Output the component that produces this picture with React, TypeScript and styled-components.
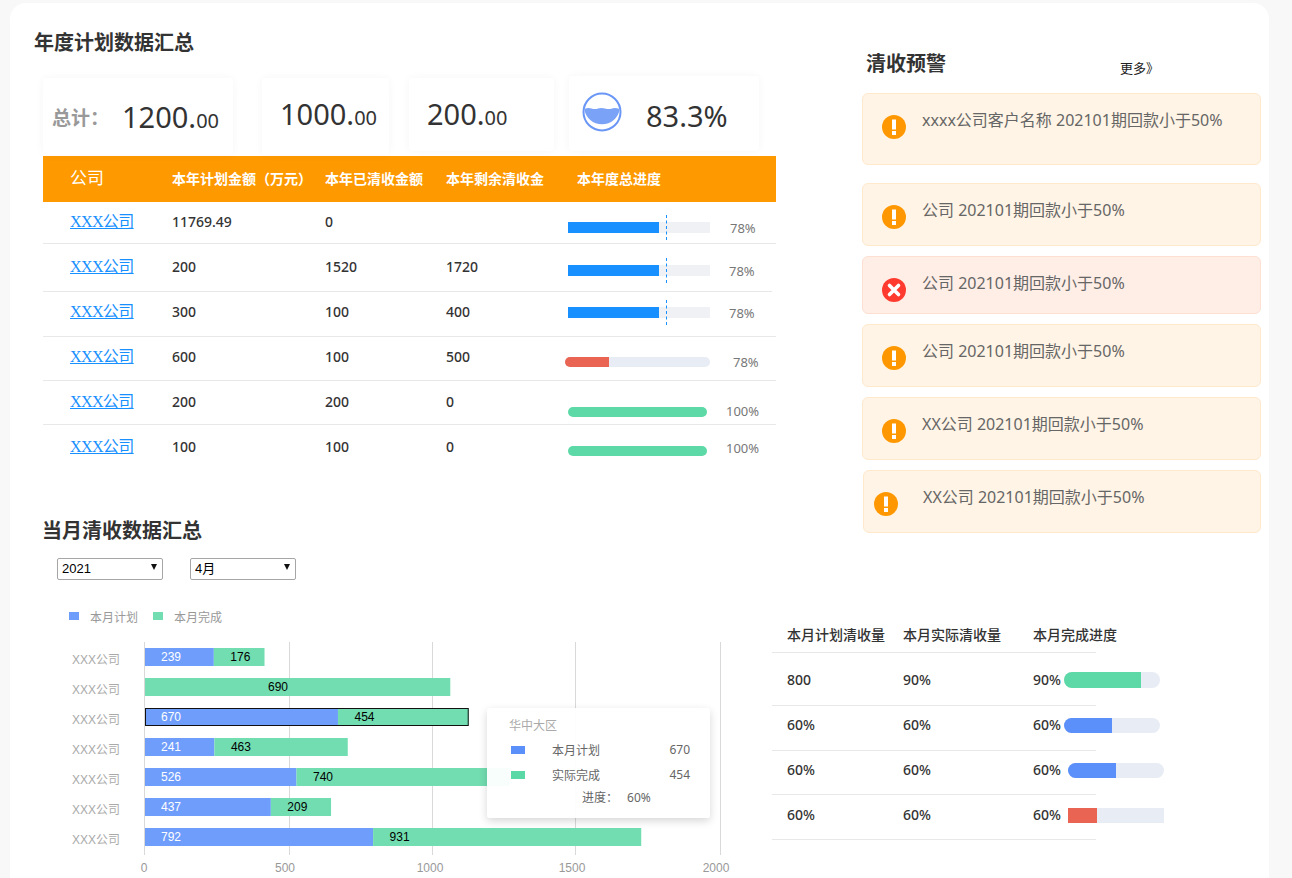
import React, { FC } from 'react';
import styled, { createGlobalStyle } from 'styled-components';

const SANS = `"Noto Sans", "Noto Sans CJK SC", sans-serif`;

const GlobalStyle = createGlobalStyle`
  html, body {
    margin: 0;
    padding: 0;
    height: 878px;
    overflow: hidden;
    background: #f8f8f8;
    font-family: ${SANS};
  }
  * { box-sizing: border-box; }
`;

const Card = styled.div`
  margin: 3px 23px 0 10px;
  height: 900px;
  background: #fff;
  border-radius: 16px;
  display: grid;
  grid-template-columns: 852px 1fr;
  grid-template-rows: 513px 110px auto;
`;

const Annual = styled.section`
  padding-top: 30px;
`;

const Title = styled.h2<{ $left: number }>`
  margin: 0 0 0 ${(p) => p.$left}px;
  font-size: 20px;
  line-height: 20px;
  font-weight: 700;
  color: #333;
  white-space: nowrap;
`;

const StatsRow = styled.div`
  display: flex;
  align-items: flex-start;
  margin: 25px 0 0 33px;
  height: 78px;
`;

const Stat = styled.div<{ $w: number; $h: number; $gap: number; $raise?: number }>`
  width: ${(p) => p.$w}px;
  height: ${(p) => p.$h}px;
  margin-left: ${(p) => p.$gap}px;
  margin-top: ${(p) => -(p.$raise || 0)}px;
  border-radius: 4px;
  background: #fff;
  box-shadow: 0 0 10px rgba(0, 0, 0, 0.04);
  display: flex;
  align-items: center;
  padding-left: ${(p) => (p.$gap === 0 ? 9 : 18)}px;
`;

const StatLabel = styled.span`
  font-size: 19px;
  font-weight: 700;
  color: #999;
  width: 70px;
  margin-top: 0;
  white-space: nowrap;
`;

const StatValue = styled.span<{ $top?: number }>`
  font-size: 29px;
  color: #333;
  margin-top: ${(p) => p.$top || 0}px;
  line-height: 36px;
`;

const StatCents = styled.span`
  font-size: 20px;
`;

const Liquid = styled.svg`
  width: 40px;
  height: 40px;
  margin: -3px 24px 0 -5px;
  flex: none;
`;

const Table = styled.div`
  margin-left: 33px;
`;

const HeadRow = styled.div`
  width: 733px;
  height: 46px;
  background: #ff9900;
  color: #fff;
  display: grid;
  grid-template-columns: 102px 153px 121px 131px 1fr;
  padding: 0 0 3px 27px;
  align-items: center;
  font-size: 14px;
  font-weight: 700;
`;

const HeadCompany = styled.span`
  font-size: 17px;
  font-weight: 400;
  margin-top: -2px;
`;

const Row = styled.div<{ $h: number; $w: number; $last?: boolean }>`
  width: ${(p) => p.$w}px;
  height: ${(p) => p.$h}px;
  display: grid;
  grid-template-columns: 102px 153px 121px 122px 1fr;
  padding-left: 27px;
  align-items: start;
  border-bottom: ${(p) => (p.$last ? 'none' : '1px solid #e8e8e8')};
  font-size: 14px;
  font-weight: 500;
  color: #333;
`;

const Cell = styled.div<{ $top: number }>`
  margin-top: ${(p) => p.$top}px;
  line-height: 24px;
  height: 24px;
`;

const CompanyLink = styled.a`
  font-family: "Liberation Serif", "Noto Sans CJK SC", serif;
  font-size: 16px;
  font-weight: 400;
  letter-spacing: -0.6px;
  color: #1890ff;
  text-decoration: underline;
`;

const ProgressCell = styled.div<{ $top: number; $left: number }>`
  margin-top: ${(p) => p.$top}px;
  margin-left: ${(p) => p.$left}px;
  display: flex;
  align-items: center;
  height: 11px;
`;

const Track = styled.div<{ $w: number; $h: number; $round: boolean; $bg: string; $ml?: number }>`
  position: relative;
  flex: none;
  width: ${(p) => p.$w}px;
  height: ${(p) => p.$h}px;
  margin-left: ${(p) => p.$ml || 0}px;
  background: ${(p) => p.$bg};
  border-radius: ${(p) => (p.$round ? p.$h / 2 : 0)}px;
  overflow: ${(p) => (p.$round ? 'hidden' : 'visible')};
`;

const Fill = styled.div<{ $w: number; $color: string }>`
  width: ${(p) => p.$w}px;
  height: 100%;
  background: ${(p) => p.$color};
`;

const Marker = styled.div`
  position: absolute;
  left: 98px;
  top: -7px;
  height: 25px;
  border-left: 1px dashed #1890ff;
`;

const Percent = styled.span<{ $gap: number; $shift?: number }>`
  margin-left: ${(p) => p.$gap}px;
  margin-bottom: ${(p) => (p.$shift || 0) * 2}px;
  font-size: 13px;
  font-weight: 400;
  color: #777;
  white-space: nowrap;
`;

const Warnings = styled.aside`
  grid-row: 1 / 3;
  grid-column: 2;
  padding-top: 51px;
`;

const WarningHead = styled.div`
  display: flex;
  align-items: flex-end;
  height: 20px;
  margin-left: 4px;
`;

const More = styled.span`
  margin-left: 174px;
  font-size: 13px;
  color: #222;
  line-height: 16px;
  margin-bottom: -2px;
  white-space: nowrap;
`;

const Alert = styled.div<{ $h: number; $gap: number; $danger?: boolean; $shifted?: boolean }>`
  display: flex;
  align-items: flex-start;
  width: ${(p) => (p.$shifted ? 398 : 399)}px;
  height: ${(p) => p.$h}px;
  margin-top: ${(p) => p.$gap}px;
  margin-left: ${(p) => (p.$shifted ? 1 : 0)}px;
  padding-left: ${(p) => (p.$shifted ? 10 : 19)}px;
  background: ${(p) => (p.$danger ? '#ffeee6' : '#fff4e5')};
  border: 1px solid ${(p) => (p.$danger ? '#fde0d2' : '#ffe9cc')};
  border-radius: 6px;
`;

const AlertIcon = styled.svg`
  flex: none;
  width: 24px;
  height: 24px;
  margin-top: 21px;
`;

const AlertText = styled.span<{ $gap: number }>`
  margin-left: ${(p) => p.$gap}px;
  margin-top: 14px;
  line-height: 24px;
  font-size: 16px;
  color: #666;
  white-space: nowrap;
`;

const MonthHead = styled.section`
  padding-top: 5px;
  grid-column: 1;
`;

const Selects = styled.div`
  display: flex;
  gap: 27px;
  margin: 15px 0 0 47px;
`;

const SelectBox = styled.div`
  position: relative;
  width: 106px;
  height: 22px;
  &::after {
    content: '';
    position: absolute;
    right: 6px;
    top: 8px;
    border-left: 3.5px solid transparent;
    border-right: 3.5px solid transparent;
    border-top: 6px solid #111;
    pointer-events: none;
  }
`;

const Select = styled.select`
  appearance: none;
  width: 100%;
  height: 100%;
  padding: 0 0 1px 4px;
  background: #fff;
  border: 1px solid #a6a6a6;
  border-radius: 2px;
  font-family: "Liberation Sans", "Noto Sans CJK SC", sans-serif;
  font-size: 13px;
  color: #000;
`;

const Legend = styled.div`
  display: flex;
  align-items: center;
  margin: 30px 0 0 59px;
  height: 18px;
  font-size: 12px;
  color: #999;
`;

const Swatch = styled.i<{ $color: string; $w: number; $h: number }>`
  display: block;
  flex: none;
  width: ${(p) => p.$w}px;
  height: ${(p) => p.$h}px;
  background: ${(p) => p.$color};
`;

const LegendSwatch = styled(Swatch)`
  margin-top: -3px;
`;

const LegendLabel = styled.span<{ $w: number }>`
  margin-left: 11px;
  width: ${(p) => p.$w}px;
`;

const MonthBody = styled.section`
  grid-column: 1 / 3;
  display: flex;
  align-items: flex-start;
`;

const ChartBox = styled.div`
  position: relative;
  flex: none;
  width: 762px;
  height: 252px;
`;

const ChartSvg = styled.svg`
  display: block;
  font-family: "Liberation Sans", "Noto Sans CJK SC", sans-serif;
`;

const Tooltip = styled.div`
  position: absolute;
  left: 477px;
  top: 82px;
  width: 223px;
  height: 110px;
  padding: 9px 20px 0 22px;
  background: rgba(255, 255, 255, 0.95);
  border-radius: 3px;
  box-shadow: 0 3px 8px rgba(0, 0, 0, 0.16);
  font-size: 12px;
  color: #666;
`;

const TipTitle = styled.div`
  color: #aaa;
  line-height: 18px;
  margin-bottom: 2px;
`;

const TipRow = styled.div`
  display: flex;
  align-items: center;
  height: 25px;
  padding-left: 2px;
`;

const TipName = styled.span`
  margin-left: 27px;
  flex: 1;
`;

const TipFoot = styled.div`
  margin: 0 0 0 73px;
  line-height: 22px;
`;

const TipFootValue = styled.span`
  margin-left: 9px;
`;

const MonthTable = styled.div`
  width: 324px;
  font-size: 14px;
  color: #333;
`;

const MonthHeadRow = styled.div`
  display: grid;
  grid-template-columns: 116px 130px 1fr;
  padding-left: 15px;
  height: 27px;
  line-height: 18px;
  font-weight: 500;
  font-size: 14px;
  white-space: nowrap;
  border-bottom: 1px solid #e8e8e8;
`;

const MonthRow = styled.div<{ $h: number; $top: number }>`
  display: grid;
  grid-template-columns: 116px 130px 1fr;
  padding: ${(p) => p.$top}px 0 0 15px;
  height: ${(p) => p.$h}px;
  line-height: 20px;
  font-weight: 500;
  border-bottom: 1px solid #e8e8e8;
`;

const MonthProgress = styled.div`
  display: flex;
  align-items: center;
  height: 20px;
  width: 140px;
`;

const MonthValue = styled.span`
  width: 31px;
  flex: none;
`;

const WarnIcon: FC = () => (
  <AlertIcon viewBox="0 0 24 24">
    <circle cx="12" cy="12" r="12" fill="#ff9800" />
    <rect x="10" y="4.5" width="4" height="10" fill="#fff" />
    <rect x="10" y="16" width="4" height="4" fill="#fff" />
  </AlertIcon>
);

const ErrorIcon: FC = () => (
  <AlertIcon viewBox="0 0 24 24">
    <circle cx="12" cy="12" r="12" fill="#ff3b30" />
    <path d="M7.5 7.5 L16.5 16.5 M16.5 7.5 L7.5 16.5" stroke="#fff" strokeWidth="3.6" strokeLinecap="round" />
  </AlertIcon>
);

const BLUE = '#1890ff';
const GREEN = '#5cd9a6';
const RED = '#ea6454';

const rows = [
  { value: ['11769.49', '0', ''], h: 42, w: 733, top: 8, bar: { top: 20, left: 0, w: 142, h: 11, fill: 91, color: BLUE, round: false, track: '#f0f1f5', marker: true }, pct: '78%', gap: 20, shift: 0 },
  { value: ['200', '1520', '1720'], h: 48, w: 729, top: 11, bar: { top: 21, left: 0, w: 142, h: 11, fill: 91, color: BLUE, round: false, track: '#f0f1f5', marker: true }, pct: '78%', gap: 19, shift: 0 },
  { value: ['300', '100', '400'], h: 45, w: 733, top: 8, bar: { top: 15, left: 0, w: 142, h: 11, fill: 91, color: BLUE, round: false, track: '#f0f1f5', marker: true }, pct: '78%', gap: 19, shift: 0 },
  { value: ['600', '100', '500'], h: 44, w: 733, top: 8, bar: { top: 19, left: -3, w: 145, h: 10, fill: 44, color: RED, round: true, track: '#e8ecf4', marker: false }, pct: '78%', gap: 23, shift: 0 },
  { value: ['200', '200', '0'], h: 44, w: 733, top: 9, bar: { top: 25, left: 0, w: 139, h: 10, fill: 139, color: GREEN, round: true, track: GREEN, marker: false }, pct: '100%', gap: 19, shift: 1 },
  { value: ['100', '100', '0'], h: 45, w: 733, top: 10, bar: { top: 20, left: 0, w: 139, h: 10, fill: 139, color: GREEN, round: true, track: GREEN, marker: false }, pct: '100%', gap: 19, shift: 3 }
];

const alerts = [
  { text: 'xxxx公司客户名称 202101期回款小于50%', h: 72, gap: 19 },
  { text: '公司 202101期回款小于50%', h: 63, gap: 18 },
  { text: '公司 202101期回款小于50%', h: 58, gap: 10, danger: true },
  { text: '公司 202101期回款小于50%', h: 63, gap: 10 },
  { text: 'XX公司 202101期回款小于50%', h: 63, gap: 10 },
  { text: 'XX公司 202101期回款小于50%', h: 63, gap: 10, shifted: true }
];

const X0 = 145;
const SCALE = 0.288;
const CHART_BLUE = '#6f9dfb';
const CHART_GREEN = '#72ddb0';
const bars = [
  { plan: 239, done: 176, cy: 657 },
  { plan: 0, done: 1060, label: 690, cy: 687, labelX: 268 },
  { plan: 670, done: 454, cy: 717, active: true },
  { plan: 241, done: 463, cy: 747 },
  { plan: 526, done: 740, cy: 777 },
  { plan: 437, done: 209, cy: 807 },
  { plan: 792, done: 931, cy: 837 }
];

const Chart: FC = () => (
  <ChartSvg width="762" height="252" viewBox="10 626 762 252">
    {[144.5, 289.5, 432.5, 575.5, 720.5].map((x) => (
      <line key={x} x1={x} x2={x} y1={642} y2={855} stroke="#d9d9d9" />
    ))}
    {bars.map((b) => {
      const split = X0 + b.plan * SCALE;
      const end = split + b.done * SCALE;
      return (
        <g key={b.cy} fontSize="12">
          <text x="72" y={b.cy + 7} fill="#aaa">XXX公司</text>
          {b.plan > 0 && <rect x={X0} y={b.cy - 9} width={split - X0} height="18" fill={CHART_BLUE} />}
          <rect x={split} y={b.cy - 9} width={end - split} height="18" fill={CHART_GREEN} />
          {b.active && (
            <rect x={X0 + 0.5} y={b.cy - 8.5} width={end - X0 - 1} height="17" fill="none" stroke="#111" />
          )}
          {b.plan > 0 && <text x={X0 + 16} y={b.cy + 4} fill="#fff">{b.plan}</text>}
          <text x={b.labelX || split + 16.5} y={b.cy + 4} fill="#000">{b.label || b.done}</text>
        </g>
      );
    })}
    {[[144, '0'], [285, '500'], [430, '1000'], [572, '1500'], [716, '2000']].map(([x, t]) => (
      <text key={t} x={x} y="872" fontSize="12" fill="#999" textAnchor="middle">{t}</text>
    ))}
  </ChartSvg>
);

const monthRows = [
  { a: '800', b: '90%', h: 53, top: 17, w: 96, fw: 77, color: GREEN, round: true, barH: 16, ml: 0 },
  { a: '60%', b: '60%', h: 45, top: 9, w: 96, fw: 48, color: '#5b8ff9', round: true, barH: 15, ml: 0 },
  { a: '60%', b: '60%', h: 44, top: 9, w: 96, fw: 48, color: '#5b8ff9', round: true, barH: 15, ml: 4 },
  { a: '60%', b: '60%', h: 45, top: 10, w: 96, fw: 29, color: RED, round: false, barH: 15, ml: 4 }
];

const App: FC = () => {
  return (
    <>
      <GlobalStyle />
      <Card>
        <Annual>
          <Title $left={24}>年度计划数据汇总</Title>
          <StatsRow>
            <Stat $w={190} $h={77} $gap={0}>
              <StatLabel>总计：</StatLabel>
              <StatValue $top={4}>1200.<StatCents>00</StatCents></StatValue>
            </Stat>
            <Stat $w={127} $h={77} $gap={29}>
              <StatValue $top={-2}>1000.<StatCents>00</StatCents></StatValue>
            </Stat>
            <Stat $w={145} $h={73} $gap={20}>
              <StatValue $top={3}>200.<StatCents>00</StatCents></StatValue>
            </Stat>
            <Stat $w={190} $h={75} $gap={15} $raise={2}>
              <Liquid viewBox="0 0 40 40">
                <circle cx="20" cy="20" r="18.5" fill="#fff" stroke="#6a96f6" strokeWidth="2" />
                <path
                  d="M2.2 17 Q6 15.5 9.5 16.5 T16 16.5 T23 16.5 T30 16.5 T37.8 17 A18 18 0 0 1 2.2 17 Z"
                  fill="#7aa3f8"
                />
              </Liquid>
              <StatValue $top={4}>83.3%</StatValue>
            </Stat>
          </StatsRow>
          <Table>
            <HeadRow>
              <HeadCompany>公司</HeadCompany>
              <span>本年计划金额（万元）</span>
              <span>本年已清收金额</span>
              <span>本年剩余清收金</span>
              <span>本年度总进度</span>
            </HeadRow>
            {rows.map((r, i) => (
              <Row key={i} $h={r.h} $w={r.w} $last={i === rows.length - 1}>
                <Cell $top={r.top}>
                  <CompanyLink href="#">XXX公司</CompanyLink>
                </Cell>
                {r.value.map((v, j) => (
                  <Cell key={j} $top={r.top}>{v}</Cell>
                ))}
                <ProgressCell $top={r.bar.top} $left={r.bar.left}>
                  <Track $w={r.bar.w} $h={r.bar.h} $round={r.bar.round} $bg={r.bar.track}>
                    <Fill $w={r.bar.fill} $color={r.bar.color} />
                    {r.bar.marker && <Marker />}
                  </Track>
                  <Percent $gap={r.gap} $shift={r.shift}>{r.pct}</Percent>
                </ProgressCell>
              </Row>
            ))}
          </Table>
        </Annual>

        <Warnings>
          <WarningHead>
            <Title $left={0}>清收预警</Title>
            <More>更多》</More>
          </WarningHead>
          {alerts.map((a, i) => (
            <Alert key={i} $h={a.h} $gap={a.gap} $danger={a.danger} $shifted={a.shifted}>
              {a.danger ? <ErrorIcon /> : <WarnIcon />}
              <AlertText $gap={a.shifted ? 25 : 16}>{a.text}</AlertText>
            </Alert>
          ))}
        </Warnings>

        <MonthHead>
          <Title $left={32}>当月清收数据汇总</Title>
          <Selects>
            <SelectBox>
              <Select defaultValue="2021">
                <option>2021</option>
                <option>2020</option>
              </Select>
            </SelectBox>
            <SelectBox>
              <Select defaultValue="4月">
                <option>4月</option>
                <option>5月</option>
              </Select>
            </SelectBox>
          </Selects>
          <Legend>
            <LegendSwatch $color={CHART_BLUE} $w={10} $h={8} />
            <LegendLabel $w={63}>本月计划</LegendLabel>
            <LegendSwatch $color={CHART_GREEN} $w={10} $h={8} />
            <LegendLabel $w={60}>本月完成</LegendLabel>
          </Legend>
        </MonthHead>

        <MonthBody>
          <ChartBox>
            <Chart />
            <Tooltip>
              <TipTitle>华中大区</TipTitle>
              <TipRow>
                <Swatch $color="#5b8ff9" $w={14} $h={8} />
                <TipName>本月计划</TipName>
                <span>670</span>
              </TipRow>
              <TipRow>
                <Swatch $color="#5ad8a6" $w={14} $h={8} />
                <TipName>实际完成</TipName>
                <span>454</span>
              </TipRow>
              <TipFoot>进度：<TipFootValue>60%</TipFootValue></TipFoot>
            </Tooltip>
          </ChartBox>
          <MonthTable>
            <MonthHeadRow>
              <span>本月计划清收量</span>
              <span>本月实际清收量</span>
              <span>本月完成进度</span>
            </MonthHeadRow>
            {monthRows.map((r, i) => (
              <MonthRow key={i} $h={r.h} $top={r.top}>
                <span>{r.a}</span>
                <span>{r.b}</span>
                <MonthProgress>
                  <MonthValue>{r.b}</MonthValue>
                  <Track $w={r.w} $h={r.barH} $round={r.round} $bg="#e8ecf4" $ml={r.ml}>
                    <Fill $w={r.fw} $color={r.color} />
                  </Track>
                </MonthProgress>
              </MonthRow>
            ))}
          </MonthTable>
        </MonthBody>
      </Card>
    </>
  );
};

export default App;
